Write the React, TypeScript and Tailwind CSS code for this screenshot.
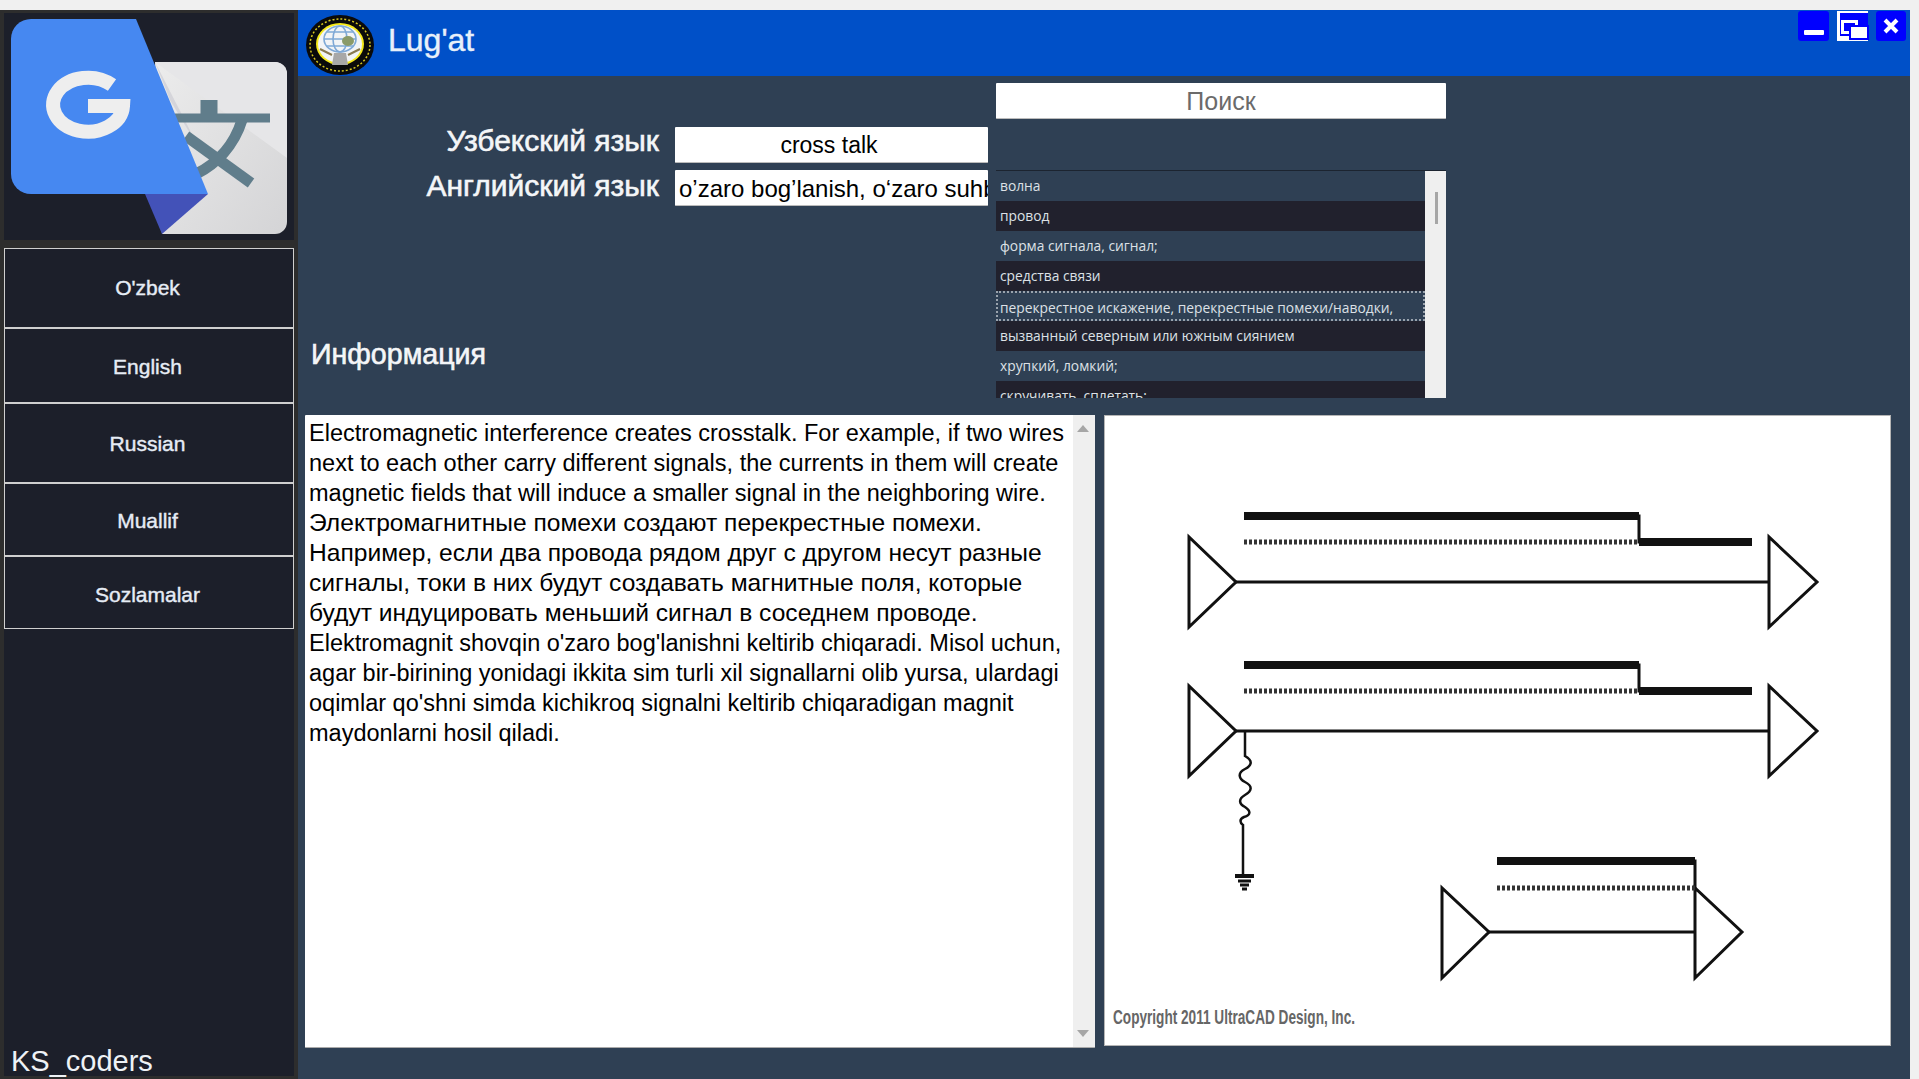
const menu = ["O'zbek", "English", "Russian", "Muallif", "Sozlamalar"];
const menuRows = [
  "h-[80px]",
  "h-[75px] pt-[3px]",
  "h-[80px] pt-[2px]",
  "h-[73px] pt-[3px]",
  "h-[73px] pt-[5px]",
];

const words = [
  { text: "волна", dark: false },
  { text: "провод", dark: true },
  { text: "форма сигнала, сигнал;", dark: false },
  { text: "средства связи", dark: true },
  { text: "перекрестное искажение, перекрестные помехи/наводки,", dark: false, focus: true },
  { text: "вызванный северным или южным сиянием", dark: true },
  { text: "хрупкий, ломкий;", dark: false },
  { text: "скручивать, сплетать;", dark: true },
];

const info = [
  { text: "Electromagnetic interference creates crosstalk. For example, if two wires" },
  { text: "next to each other carry different signals, the currents in them will create" },
  { text: "magnetic fields that will induce a smaller signal in the neighboring wire." },
  { text: "Электромагнитные помехи создают перекрестные помехи.", ru: true },
  { text: "Например, если два провода рядом друг с другом несут разные", ru: true },
  { text: "сигналы, токи в них будут создавать магнитные поля, которые", ru: true },
  { text: "будут индуцировать меньший сигнал в соседнем проводе.", ru: true },
  { text: "Elektromagnit shovqin o'zaro bog'lanishni keltirib chiqaradi. Misol uchun," },
  { text: "agar bir-birining yonidagi ikkita sim turli xil signallarni olib yursa, ulardagi" },
  { text: "oqimlar qo'shni simda kichikroq signalni keltirib chiqaradigan magnit" },
  { text: "maydonlarni hosil qiladi." },
];

const TranslateLogo = () => (
  <svg width="290" height="227" viewBox="4 13 290 227" className="block">
    <defs>
      <linearGradient id="card" x1="0" y1="0" x2="1" y2="1">
        <stop offset="0" stopColor="#ececec" />
        <stop offset="1" stopColor="#d4d4d6" />
      </linearGradient>
    </defs>
    <path d="M155 62H275a12 12 0 0 1 12 12V222a12 12 0 0 1-12 12H162Z" fill="url(#card)" />
    <path d="M155 62L287 158V74a12 12 0 0 0-12-12Z" fill="#e6e6e8" />
    <path d="M155 62L200 150L170 100Z" fill="#c8c8d0" opacity="0.6" />
    <g stroke="#607d8b" fill="none">
      <path d="M175 118H270" strokeWidth="9" />
      <path d="M209 100V116" strokeWidth="17" />
      <path d="M242 120C234 146 216 164 196 174" strokeWidth="11" />
      <path d="M186 136L251 183" strokeWidth="11" />
    </g>
    <path d="M145 194H208L162 234Z" fill="#4352b8" />
    <path d="M136 19L208 194H31a20 20 0 0 1-20-20V39a20 20 0 0 1 20-20Z" fill="#4688f1" />
    <path d="M112 85A35 27 0 1 0 123 106H88" stroke="#eeeeee" strokeWidth="14" fill="none" />
  </svg>
);

const Emblem = () => (
  <svg width="68" height="60" viewBox="0 0 68 60" className="block">
    <ellipse cx="34" cy="30" rx="34" ry="30" fill="#0a0a0a" />
    <ellipse cx="34" cy="30" rx="30" ry="26" fill="none" stroke="#d8c820" strokeWidth="1.5" strokeDasharray="2 2" />
    <ellipse cx="34" cy="29" rx="24" ry="21" fill="#f4e81c" />
    <ellipse cx="34" cy="29" rx="22" ry="19" fill="#f2f4f6" />
    <g stroke="#7fa9d6" strokeWidth="1.6" fill="none">
      <ellipse cx="34" cy="24" rx="16" ry="13" />
      <ellipse cx="34" cy="24" rx="7" ry="13" />
      <path d="M18 24H50M21 17H47M21 31H47" />
    </g>
    <ellipse cx="42" cy="26" rx="6" ry="5" fill="#8a9a68" />
    <path d="M28 38H40L42 50H26Z" fill="#a8a8a8" />
    <path d="M14 34L26 40M54 34L42 40" stroke="#8a7a50" strokeWidth="2" />
  </svg>
);

const Circuit = () => (
  <svg width="787" height="630" viewBox="1104 415 787 630" className="block">
    <g fill="none" stroke="#111" strokeWidth="3">
      <path d="M1188 536V626L1235 581Z" />
      <path d="M1235 581H1768" />
      <path d="M1768 536V626L1816 581Z" />
      <path d="M1188 685V775L1235 730Z" />
      <path d="M1235 730H1768" />
      <path d="M1768 685V775L1816 730Z" />
      <path d="M1441 887V977L1488 931Z" />
      <path d="M1488 931H1694" />
      <path d="M1694 887V977L1741 931Z" />
      <path
        d="M1244 730V755C1253 760 1250 765 1244 768C1236 772 1238 778 1244 781C1252 785 1251 790 1244 794C1237 798 1238 803 1244 806C1250 810 1250 814 1243 816C1238 818 1239 822 1242 824V875"
        strokeWidth="2.5"
      />
      <path d="M1234 875H1253" strokeWidth="4" />
      <path d="M1237 880H1250M1239 884H1248M1241 888H1246" strokeWidth="3" />
      <path d="M1243 515H1638V541H1751" strokeWidth="3" />
      <path d="M1243 664H1638V690H1751" strokeWidth="3" />
      <path d="M1496 860H1694V887" strokeWidth="3" />
      <path d="M1243 515H1638M1638 541H1751M1243 664H1638M1638 690H1751M1496 860H1694" strokeWidth="8" />
      <path d="M1243 541H1638M1243 690H1638M1496 887H1694" strokeWidth="5" strokeDasharray="3 2" stroke="#333" />
    </g>
    <text
      x="1112"
      y="1023"
      textLength="242"
      lengthAdjust="spacingAndGlyphs"
      fontFamily="Liberation Sans, sans-serif"
      fontWeight="700"
      fontSize="20"
      fill="#666"
    >
      Copyright 2011 UltraCAD Design, Inc.
    </text>
  </svg>
);

const Sidebar = () => (
  <div className="w-[298px] shrink-0 bg-[#2d2d2d] px-1 pt-[3px] pb-[3px] flex flex-col">
    <div className="h-[227px] bg-[#1c1f2a]">
      <TranslateLogo />
    </div>
    <div className="flex-1 mt-2 bg-[#1c1f2a] flex flex-col">
      {menu.map((m, i) => (
        <div
          key={m}
          className={`${menuRows[i]} border border-[#cfcfcf] pr-[3px] flex items-center justify-center text-[21px] [-webkit-text-stroke:0.4px] text-[#e6ecf5]`}
        >
          {m}
        </div>
      ))}
      <div className="mt-auto pl-[7px] text-[29px] leading-[30px] text-[#eef2f6]">KS_coders</div>
    </div>
  </div>
);

const Field = ({
  label,
  value,
  center,
  lift,
}: {
  label: string;
  value: string;
  center?: boolean;
  lift: string;
}) => (
  <div className="flex justify-end items-center">
    <div className={`text-[30px] leading-[36px] [-webkit-text-stroke:0.6px] text-[#f4f6f8] mr-4 ${lift}`}>{label}</div>
    <div
      className={`w-[313px] h-[36px] bg-white rounded-[1px] border-b border-[#bbbbbb] leading-[37px] text-black overflow-hidden whitespace-nowrap ${
        center ? "text-center text-[23px] pr-[5px]" : "pl-1 text-[24px]"
      }`}
    >
      {value}
    </div>
  </div>
);

const WordList = () => (
  <div className="mt-[51px] h-[228px] flex overflow-hidden border-t border-[#1c2430]">
    <div className="flex-1 font-['Open_Sans',sans-serif] text-[13.8px] text-[#dde1e6]">
      {words.map((w) => (
        <div
          key={w.text}
          className={`h-[30px] leading-[29px] pl-1 whitespace-nowrap ${w.dark ? "bg-[#21212d]" : ""} ${
            w.focus ? "border-2 border-dotted border-[#9aa3ad] pl-[2px] leading-[24px]" : ""
          }`}
        >
          {w.text}
        </div>
      ))}
    </div>
    <div className="w-[21px] bg-[#efefef] pt-[21px] pl-[10px]">
      <div className="w-[3px] h-[32px] bg-[#a6a6a6]" />
    </div>
  </div>
);

const InfoBox = () => (
  <div className="w-[790px] h-[633px] bg-white rounded-[1px] flex border-b border-[#aaaaaa]">
    <div className="flex-1 pl-1 pt-[3px] leading-[30px] text-black whitespace-nowrap overflow-hidden">
      {info.map((line) => (
        <div key={line.text} className={line.ru ? "text-[24.6px]" : "text-[23.5px]"}>
          {line.text}
        </div>
      ))}
    </div>
    <div className="w-[22px] bg-[#efefef] flex flex-col items-center justify-between py-[10px] pr-[2px]">
      <svg width="12" height="7" viewBox="0 0 12 7">
        <path d="M6 0L12 7H0Z" fill="#a6a6a6" />
      </svg>
      <svg width="12" height="7" viewBox="0 0 12 7">
        <path d="M0 0H12L6 7Z" fill="#a6a6a6" />
      </svg>
    </div>
  </div>
);

const WindowButtons = () => (
  <div className="flex gap-2 pt-[1px] pr-1">
    <div className="w-[31px] h-[30px] bg-[#0000ff] rounded-[3px] flex items-end justify-center pb-[6px]">
      <div className="w-5 h-[5px] bg-white rounded-[1px]" />
    </div>
    <div className="relative w-[31px] h-[30px] bg-white">
      <div className="absolute left-[3px] top-[2px] right-0 bottom-[5px] bg-[#0000ff]" />
      <div className="absolute left-[4px] top-[9px] w-[17px] h-[14px] border-[3px] border-white bg-[#0000ff]" />
      <div className="absolute left-[12px] top-[14px] w-[16px] h-[11px] bg-white border-2 border-[#0000ff] box-content" />
    </div>
    <div className="w-[30px] h-[30px] bg-[#0000ff] rounded-[3px] flex items-center justify-center">
      <svg width="16" height="16" viewBox="0 0 16 16">
        <path d="M2 2L14 14M14 2L2 14" stroke="#fff" strokeWidth="4" />
      </svg>
    </div>
  </div>
);

export default function App() {
  return (
    <div className="w-[1919px] h-[1079px] overflow-hidden flex flex-col bg-[#f0f0f0] font-['Liberation_Sans',Arial,sans-serif]">
      <div className="h-[10px] shrink-0 bg-[#f0f0f0]" />
      <div className="flex-1 flex min-h-0">
        <Sidebar />
        <div className="w-[1612px] shrink-0 bg-[#2f4054] flex flex-col">
          <div className="h-[66px] shrink-0 bg-[#0050c8] flex justify-between">
            <div className="flex items-center pl-2 pt-[3px]">
              <Emblem />
              <div className="ml-[14px] -mt-[10px] text-[32px] [-webkit-text-stroke:0.4px] text-[#e8f0fa]">Lug'at</div>
            </div>
            <WindowButtons />
          </div>

          <div className="h-[339px] shrink-0 flex">
            <div className="w-[698px] shrink-0 pt-[51px] pr-2 flex flex-col">
              <div className="flex flex-col gap-[7px]">
                <Field label="Узбекский язык" value="cross talk" center lift="-mt-2" />
                <Field label="Английский язык" value="o’zaro bog’lanish, o‘zaro suhbat" lift="-mt-1" />
              </div>
              <div className="mt-[127px] pl-[13px] text-[28.6px] [-webkit-text-stroke:0.6px] text-[#f4f6f8]">Информация</div>
            </div>
            <div className="w-[450px] shrink-0 pt-[7px]">
              <div className="h-9 bg-white rounded-[1px] border-b border-[#bbbbbb] text-center text-[25px] leading-[36px] text-[#6b6b6b]">
                Поиск
              </div>
              <WordList />
            </div>
          </div>

          <div className="flex pl-[7px] gap-[9px]">
            <InfoBox />
            <div className="w-[787px] h-[631px] bg-white border border-[#b5b5b5]">
              <Circuit />
            </div>
          </div>
        </div>
        <div className="w-[9px] shrink-0 bg-[#f0f0f0]" />
      </div>
    </div>
  );
}
